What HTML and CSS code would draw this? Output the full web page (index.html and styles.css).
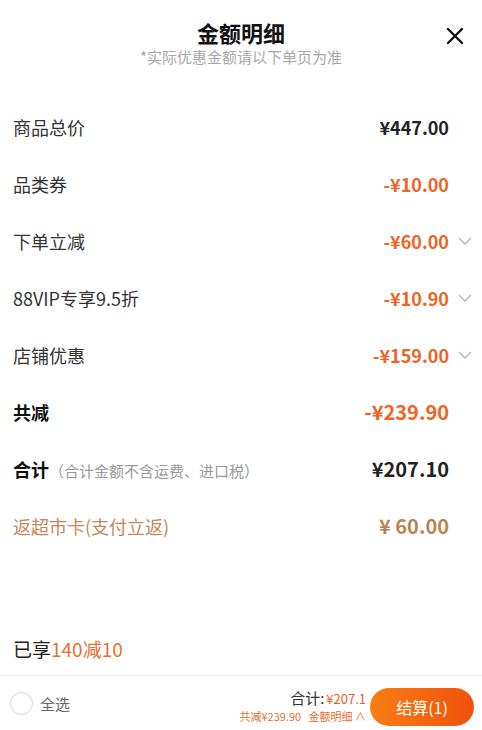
FILE: index.html
```html
<!DOCTYPE html>
<html lang="zh-CN">
<head>
    <meta charset="UTF-8">
    <meta name="viewport" content="width=device-width, initial-scale=1.0">
    <title>金额明细</title>
    <link rel="stylesheet" href="styles.css">
</head>
<body>

<div class="sheet">
    <div class="header">
        <h2 class="title">金额明细</h2>
        <div class="subtitle">*实际优惠金额请以下单页为准</div>
        <button type="button" class="closeBtn" aria-label="关闭">
            <svg width="18" height="18" viewBox="0 0 18 18">
                <path d="M2 2 L16 16 M16 2 L2 16" stroke="#111" stroke-width="2.4" stroke-linecap="round"/>
            </svg>
        </button>
    </div>

    <div class="detailList">
        <div class="row">
            <span class="label">商品总价</span>
            <span class="value">¥447.00</span>
            <span class="arrow"></span>
        </div>
        <div class="row">
            <span class="label">品类券</span>
            <span class="value minus">-¥10.00</span>
            <span class="arrow"></span>
        </div>
        <div class="row">
            <span class="label">下单立减</span>
            <span class="value minus">-¥60.00</span>
            <span class="arrow"><svg width="14" height="8" viewBox="0 0 14 8"><path d="M1 1 L7 7 L13 1" fill="none" stroke="#b5b5b5" stroke-width="1.3"/></svg></span>
        </div>
        <div class="row">
            <span class="label">88VIP专享9.5折</span>
            <span class="value minus">-¥10.90</span>
            <span class="arrow"><svg width="14" height="8" viewBox="0 0 14 8"><path d="M1 1 L7 7 L13 1" fill="none" stroke="#b5b5b5" stroke-width="1.3"/></svg></span>
        </div>
        <div class="row">
            <span class="label">店铺优惠</span>
            <span class="value minus">-¥159.00</span>
            <span class="arrow"><svg width="14" height="8" viewBox="0 0 14 8"><path d="M1 1 L7 7 L13 1" fill="none" stroke="#b5b5b5" stroke-width="1.3"/></svg></span>
        </div>
        <div class="row">
            <span class="label strong">共减</span>
            <span class="value minus big">-¥239.90</span>
            <span class="arrow"></span>
        </div>
        <div class="row">
            <span class="label strong">合计<span class="note">（合计金额不含运费、进口税）</span></span>
            <span class="value big">¥207.10</span>
            <span class="arrow"></span>
        </div>
        <div class="row">
            <span class="label rebate">返超市卡(支付立返)</span>
            <span class="value rebate big">¥ 60.00</span>
            <span class="arrow"></span>
        </div>
    </div>

    <div class="enjoyed">已享<span class="hl">140减10</span></div>

    <div class="footerBar">
        <label class="selectAll">
            <span class="radio"></span>
            <span>全选</span>
        </label>
        <div class="totalBox">
            <div class="totalLine">合计:<span class="totalNum">¥207.1</span></div>
            <div class="saveLine">共减¥239.90&nbsp;&nbsp;&nbsp;金额明细 ∧</div>
        </div>
        <button type="button" class="payBtn">结算(1)</button>
    </div>
</div>

</body>
</html>
```

FILE: styles.css
```css
body {
    font-family: "Noto Sans CJK SC", "Noto Sans", sans-serif;
    margin: 0;
    padding: 0;
    background-color: #fff;
    color: #222;
}

.sheet {
    width: 482px;
    height: 730px;
    display: flex;
    flex-direction: column;
    overflow: hidden;
}

/* Header */
.header {
    position: relative;
    height: 98px;
    text-align: center;
    padding-top: 17px;
    box-sizing: border-box;
}

.title {
    margin: 0;
    font-size: 22px;
    line-height: 30px;
    font-weight: bold;
    color: #111;
}

.subtitle {
    font-size: 15px;
    line-height: 20px;
    color: #a8a8a8;
}

.closeBtn {
    position: absolute;
    top: 27px;
    right: 18px;
    background: none;
    border: none;
    padding: 0;
    cursor: pointer;
}

/* Rows */
.row {
    display: flex;
    align-items: center;
    height: 57px;
    padding-left: 13px;
    padding-right: 10px;
}

.label {
    flex: 1;
    font-size: 18px;
    color: #333;
}

.label.strong {
    font-weight: bold;
    color: #111;
}

.note {
    font-size: 15px;
    font-weight: normal;
    color: #999;
}

.value {
    font-size: 18px;
    font-weight: bold;
    color: #222;
}

.value.big {
    font-size: 20px;
}

.value.minus {
    color: #ee6422;
}

.rebate {
    color: #c4875a;
}

.value.rebate {
    color: #b98553;
}

.arrow {
    width: 23px;
    display: flex;
    justify-content: flex-end;
}

/* Bottom */
.enjoyed {
    margin-top: auto;
    padding-left: 13px;
    font-size: 19px;
    line-height: 26px;
    color: #222;
    margin-bottom: 13px;
}

.hl {
    color: #e8702f;
}

.footerBar {
    display: flex;
    align-items: center;
    height: 54px;
    border-top: 1px solid #f0f0f0;
    padding: 0 8px 0 10px;
}

.selectAll {
    display: flex;
    align-items: center;
    gap: 7px;
    font-size: 15px;
    color: #666;
}

.radio {
    width: 21px;
    height: 21px;
    border: 1.5px solid #d5d5d5;
    border-radius: 50%;
}

.totalBox {
    margin-left: auto;
    text-align: right;
    margin-right: 4px;
    padding-top: 6px;
}

.totalLine {
    font-size: 15px;
    line-height: 18px;
    color: #333;
}

.totalNum {
    font-size: 13px;
    color: #f05a1e;
    margin-left: 2px;
}

.saveLine {
    font-size: 11px;
    line-height: 16px;
    color: #e8702f;
}

.payBtn {
    width: 104px;
    height: 38px;
    margin-top: 8px;
    border: none;
    border-radius: 19px;
    background: linear-gradient(90deg, #f97d12, #f0520c);
    color: #fff;
    font-family: inherit;
    font-size: 16px;
    cursor: pointer;
}
```
